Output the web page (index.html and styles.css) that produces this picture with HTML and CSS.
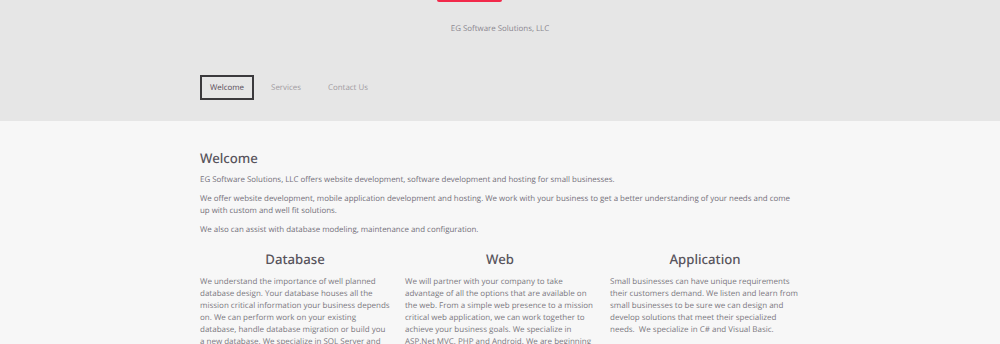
FILE: index.html
```html
<!DOCTYPE html>
<html lang="en">
<head>
  <meta charset="UTF-8">
  <title>EG Software Solutions, LLC</title>
  <link rel="stylesheet" href="styles.css">
</head>
<body>
<header class="site-header">
  <div class="logo"></div>
  <p class="tagline">EG Software Solutions, LLC</p>
  <nav class="nav">
    <a class="nav__item is-active" href="#">Welcome</a>
    <a class="nav__item" href="#">Services</a>
    <a class="nav__item" href="#">Contact Us</a>
  </nav>
</header>

<main class="content">
  <div class="container">
    <h2 class="page-title">Welcome</h2>
    <p>EG Software Solutions, LLC offers website development, software development and hosting for small businesses.</p>
    <p>We offer website development, mobile application development and hosting. We work with your business to get a better understanding of your needs and come up with custom and well fit solutions.</p>
    <p>We also can assist with database modeling, maintenance and configuration.</p>

    <div class="services">
      <div class="service">
        <h3 class="service__title">Database</h3>
        <p>We understand the importance of well planned database design. Your database houses all the mission critical information your business depends on. We can perform work on your existing database, handle database migration or build you a new database. We specialize in SQL Server and MySQL.</p>
      </div>
      <div class="service">
        <h3 class="service__title">Web</h3>
        <p>We will partner with your company to take advantage of all the options that are available on the web. From a simple web presence to a mission critical web application, we can work together to achieve your business goals. We specialize in ASP.Net MVC, PHP and Android. We are beginning to work with iOS as well.</p>
      </div>
      <div class="service">
        <h3 class="service__title">Application</h3>
        <p>Small businesses can have unique requirements their customers demand. We listen and learn from small businesses to be sure we can design and develop solutions that meet their specialized needs. &nbsp;We specialize in C# and Visual Basic.</p>
        <p>(If you need help with Microsoft Access, contact us.)</p>
      </div>
    </div>
  </div>
</main>
</body>
</html>
```

FILE: styles.css
```css
body {
  margin: 0;
  padding: 0;
  background: #f7f7f7;
  font-family: "Open Sans", "Noto Sans", sans-serif;
  font-size: 7.92px;
  line-height: 12px;
  color: #75717b;
  text-rendering: geometricPrecision;
}
p {
  margin: 0 0 7px;
}
.site-header {
  background: #e6e6e6;
  padding-bottom: 21px;
}
.logo {
  width: 65px;
  height: 2px;
  margin-left: 437px;
  background: #f2294b;
  border-radius: 0 0 3px 3px;
}
.tagline {
  margin: 21px 0 0;
  text-align: center;
  color: #8b8790;
}
.nav {
  display: flex;
  gap: 7px;
  width: 600px;
  margin: 40px auto 0;
}
.nav__item {
  display: block;
  padding: 0 8px;
  height: 21px;
  line-height: 22px;
  border: 2px solid transparent;
  color: #a29ca2;
  text-decoration: none;
}
.nav__item.is-active {
  border-color: #3b3a3d;
  color: #574c58;
}
.content {
  padding-top: 29px;
}
.container {
  width: 600px;
  margin: 0 auto;
}
.page-title {
  margin: 0 0 8px;
  font-family: "Noto Sans", sans-serif;
  font-size: 13.2px;
  line-height: 16px;
  font-weight: 500;
  color: #57545c;
}
.services {
  display: grid;
  grid-template-columns: repeat(3, 1fr);
  gap: 15px;
  margin-top: 15px;
}
.service__title {
  margin: 0 0 9px;
  font-family: "Noto Sans", sans-serif;
  font-size: 13.2px;
  line-height: 16px;
  font-weight: 500;
  text-align: center;
  color: #57545c;
}
.service p {
  font-size: 8px;
  color: #7b7780;
}
```
